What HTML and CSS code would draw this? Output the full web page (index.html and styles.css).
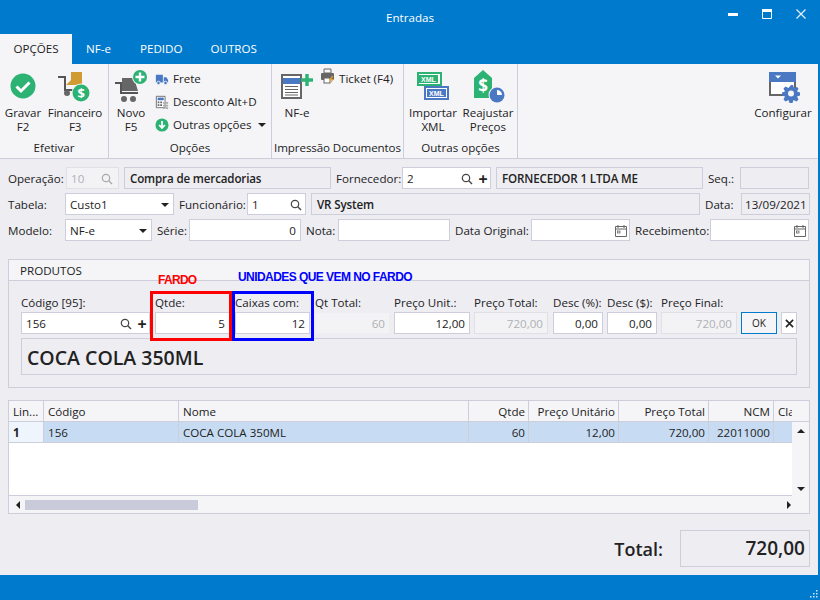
FILE: index.html
```html
<!DOCTYPE html>
<html lang="pt-BR">
<head>
<meta charset="utf-8">
<title>Entradas</title>
<link rel="stylesheet" href="styles.css">
</head>
<body>
<div class="window">
  <header class="titlebar">
    <div class="title">Entradas</div>
    <div class="winbtns">
      <svg class="winbtn" viewBox="0 0 12 12"><rect x="1" y="5" width="10" height="3" fill="#fff"/></svg>
      <svg class="winbtn" viewBox="0 0 12 12"><path d="M1.500 1.500h9v9h-9z" fill="none" stroke="#fff"/><rect x="1" y="1" width="10" height="3" fill="#fff"/></svg>
      <svg class="winbtn" viewBox="0 0 12 12"><path d="M1.500 1.500l9 9M10.500 1.500l-9 9" stroke="#e8f1fa" stroke-width="1.200"/></svg>
    </div>
  </header>
  <nav class="tabs">
    <div class="tab active">OPÇÕES</div>
    <div class="tab t-nfe">NF-e</div>
    <div class="tab t-ped">PEDIDO</div>
    <div class="tab t-out">OUTROS</div>
  </nav>
  <section class="ribbon">
    <div class="group g1">
      <div class="group-body">
        <div class="big b-gravar">
          <svg class="ico" viewBox="0 0 36 36"><circle cx="18" cy="16" r="12.500" fill="#2cb272"/><path d="M11.500 16.500l4.500 4.500 8.500-8.500" fill="none" stroke="#fff" stroke-width="3"/></svg>
          <span>Gravar<br>F2</span>
        </div>
        <div class="big b-fin">
          <svg class="ico" viewBox="0 0 36 36"><path d="M1 7h7v13h8" fill="none" stroke="#555" stroke-width="2"/><path d="M14 2h11v13H9l5-5z" fill="#d09b30"/><circle cx="10" cy="23" r="3" fill="#666"/><circle cx="24" cy="23" r="9.500" fill="#f5f5f8"/><circle cx="24" cy="23" r="8.500" fill="#2cb272"/><text x="24" y="28" class="dollar">$</text></svg>
          <span>Financeiro<br>F3</span>
        </div>
      </div>
      <div class="group-title">Efetivar</div>
    </div>
    <div class="group g2">
      <div class="group-body">
        <div class="big b-novo">
          <svg class="ico" viewBox="0 0 36 36"><path d="M2 13h6v10h17" fill="none" stroke="#555" stroke-width="2"/><path d="M9 21V8h12l4 13z" fill="#666"/><circle cx="11" cy="29" r="3" fill="#666"/><circle cx="20" cy="29" r="3" fill="#666"/><circle cx="27" cy="7" r="8" fill="#f5f5f8"/><circle cx="27" cy="7" r="7" fill="#2cb272"/><path d="M27 2.500v9M22.500 7h9" stroke="#fff" stroke-width="2.400"/></svg>
          <span>Novo<br>F5</span>
        </div>
        <div class="smalls">
          <div class="small">
            <svg class="sico" viewBox="0 0 16 16"><path d="M1 3h8v9H1zM10 6h3l2 3v3h-5z" fill="#4a78c2"/><circle cx="4" cy="12.500" r="2" fill="#4a78c2" stroke="#f5f5f8"/><circle cx="12" cy="12.500" r="2" fill="#4a78c2" stroke="#f5f5f8"/></svg>
            <span>Frete</span>
          </div>
          <div class="small">
            <svg class="sico" viewBox="0 0 16 16"><path d="M1.500 1.500h10v13h-10z" fill="#fff" stroke="#666"/><rect x="3" y="3" width="7" height="3" fill="#4a78c2"/><path d="M3 7.500h2v2H3zM6 7.500h2v2H6zM3 10.500h2v2H3zM6 10.500h2v2H6z" fill="#666"/><path d="M9 8h2v2H9zM12 8h3v2h-3zM9 11h2v2H9zM12 11h3v2h-3zM9 14h2v2H9zM12 14h3v2h-3z" fill="#aaa"/></svg>
            <span>Desconto Alt+D</span>
          </div>
          <div class="small">
            <svg class="sico" viewBox="0 0 16 16"><circle cx="8" cy="8" r="7.500" fill="#2cb272"/><path d="M8 3.500v8M4.700 8L8 11.500 11.300 8" fill="none" stroke="#fff" stroke-width="2"/></svg>
            <span>Outras opções</span>
            <i class="caret rib-caret"></i>
          </div>
        </div>
      </div>
      <div class="group-title">Opções</div>
    </div>
    <div class="group g3">
      <div class="group-body">
        <div class="big b-nfe">
          <svg class="ico" viewBox="0 0 36 36"><path d="M3 5h19v23H3z" fill="#fff" stroke="#666" stroke-width="2"/><rect x="4" y="8" width="17" height="6" fill="#4a78c2"/><path d="M6 16.500h13M6 19.500h13M6 22.500h13M6 25h13" stroke="#666"/><path d="M28 4v12M22 10h12" stroke="#2cb272" stroke-width="3.400"/></svg>
          <span>NF-e</span>
        </div>
        <div class="small s-ticket">
          <svg class="sico2" viewBox="0 0 16 16"><path d="M4 1h7v4H4z" fill="none" stroke="#666"/><rect x="1" y="5" width="13" height="7" rx="1" fill="#666"/><rect x="4" y="10" width="6" height="5" fill="#fff" stroke="#666"/><path d="M12 8l-3 4h2.500l-1.500 4 4-5h-2.500l2-3z" fill="#e6a32a"/></svg>
          <span>Ticket (F4)</span>
        </div>
      </div>
      <div class="group-title">Impressão Documentos</div>
    </div>
    <div class="group g4">
      <div class="group-body">
        <div class="big b-xml">
          <svg class="ico" viewBox="0 0 36 36"><path d="M3 3h23v12H3z" fill="#fff" stroke="#2cb272" stroke-width="2"/><rect x="4" y="5" width="19" height="8" fill="#2cb272"/><text x="13.500" y="11.500" class="xml">XML</text><path d="M10 17h23v12H10z" fill="#fff" stroke="#4a78c2" stroke-width="2"/><rect x="12" y="19" width="19" height="8" fill="#4a78c2"/><text x="21.500" y="25.500" class="xml">XML</text></svg>
          <span>Importar<br>XML</span>
        </div>
        <div class="big b-rea">
          <svg class="ico" viewBox="0 0 36 36"><path d="M13 0l9 8v20H4V8z" fill="#2cb272"/><text x="13" y="22" class="dollar2">$</text><circle cx="27" cy="25" r="8.500" fill="#f5f5f8"/><circle cx="27" cy="25" r="7.500" fill="#4a78c2"/><path d="M27 25v-5a5 5 0 0 1 5 5z" fill="#fff"/></svg>
          <span>Reajustar<br>Preços</span>
        </div>
      </div>
      <div class="group-title">Outras opções</div>
    </div>
    <div class="group g5">
      <div class="group-body">
        <div class="big b-conf">
          <svg class="ico" viewBox="0 0 36 36"><path d="M5 3h25v22H5z" fill="#fff" stroke="#666" stroke-width="2"/><rect x="4" y="2" width="27" height="10" fill="#4a78c2"/><path d="M10 5.500h6l-3 3z" fill="#fff"/><path d="M26 15h2l1 3 3-1 1.500 1.500-1.500 3 3 1v3l-3 1 1.500 3-2 2-3-1.500-1 3h-3l-1-3-3 1.500-2-2 1.500-3-3-1v-3l3-1-1.500-3 2-2 3 1.500z" fill="#4a78c2"/><circle cx="26" cy="23.500" r="3" fill="#f5f5f8"/></svg>
          <span>Configurar</span>
        </div>
      </div>
    </div>
  </section>

  <main class="content">
    <div class="form">
      <div class="row">
        <label class="lb l-58">Operação:</label>
        <div class="in disabled w-53"><span>10</span><svg class="mag dim" viewBox="0 0 12 12"><circle cx="5" cy="5" r="3.700" fill="none" stroke="currentColor" stroke-width="1.200"/><path d="M7.800 7.800L11 11" stroke="currentColor" stroke-width="1.400"/></svg></div>
        <div class="disp w-207">Compra de mercadorias</div>
        <label class="lb l-66">Fornecedor:</label>
        <div class="in w-89 has-plus"><span>2</span><svg class="mag" viewBox="0 0 12 12"><circle cx="5" cy="5" r="3.700" fill="none" stroke="currentColor" stroke-width="1.200"/><path d="M7.800 7.800L11 11" stroke="currentColor" stroke-width="1.400"/></svg><b class="plus">+</b></div>
        <div class="disp w-207">FORNECEDOR 1 LTDA ME</div>
        <label class="lb l-32">Seq.:</label>
        <div class="disp w-69"></div>
      </div>
      <div class="row">
        <label class="lb l-57">Tabela:</label>
        <div class="in w-109"><span>Custo1</span><i class="caret"></i></div>
        <label class="lb l-68">Funcionário:</label>
        <div class="in w-59 near"><span>1</span><svg class="mag" viewBox="0 0 12 12"><circle cx="5" cy="5" r="3.700" fill="none" stroke="currentColor" stroke-width="1.200"/><path d="M7.800 7.800L11 11" stroke="currentColor" stroke-width="1.400"/></svg></div>
        <div class="disp w-389">VR System</div>
        <label class="lb l-36">Data:</label>
        <div class="disp w-69 nb">13/09/2021</div>
      </div>
      <div class="row">
        <label class="lb l-57">Modelo:</label>
        <div class="in w-87"><span>NF-e</span><i class="caret"></i></div>
        <label class="lb l-32">Série:</label>
        <div class="in w-112 right"><span>0</span></div>
        <label class="lb l-32">Nota:</label>
        <div class="in w-112"></div>
        <label class="lb l-76">Data Original:</label>
        <div class="in w-99"><svg class="cal" viewBox="0 0 12 12"><path d="M.5 1.500h11v10H.5zM.5 4h11" fill="none" stroke="#666"/><path d="M3 0v3M9 0v3" stroke="#666"/><rect x="2.500" y="6" width="2.500" height="2" fill="none" stroke="#666" stroke-width=".8"/></svg></div>
        <label class="lb l-75">Recebimento:</label>
        <div class="in w-99"><svg class="cal" viewBox="0 0 12 12"><path d="M.5 1.500h11v10H.5zM.5 4h11" fill="none" stroke="#666"/><path d="M3 0v3M9 0v3" stroke="#666"/><rect x="2.500" y="6" width="2.500" height="2" fill="none" stroke="#666" stroke-width=".8"/></svg></div>
      </div>
    </div>

    <section class="panel">
      <div class="panel-head">PRODUTOS</div>
      <div class="panel-body">
        <div class="fields">
          <div class="field f-cod"><label>Código [95]:</label><div class="in has-plus"><span>156</span><svg class="mag" viewBox="0 0 12 12"><circle cx="5" cy="5" r="3.700" fill="none" stroke="currentColor" stroke-width="1.200"/><path d="M7.800 7.800L11 11" stroke="currentColor" stroke-width="1.400"/></svg><b class="plus">+</b></div></div>
          <div class="field f-75"><label>Qtde:</label><div class="in right"><span>5</span></div></div>
          <div class="field f-75"><label>Caixas com:</label><div class="in right"><span>12</span></div></div>
          <div class="field f-75"><label>Qt Total:</label><div class="in right disabled nob"><span>60</span></div></div>
          <div class="field f-76 tight"><label>Preço Unit.:</label><div class="in right"><span>12,00</span></div></div>
          <div class="field f-74 tight"><label>Preço Total:</label><div class="in right disabled"><span>720,00</span></div></div>
          <div class="field f-50"><label>Desc (%):</label><div class="in right"><span>0,00</span></div></div>
          <div class="field f-50 tight"><label>Desc ($):</label><div class="in right"><span>0,00</span></div></div>
          <div class="field f-76 tight"><label>Preço Final:</label><div class="in right disabled"><span>720,00</span></div></div>
          <div class="ok tight">OK</div>
          <div class="cancel tight"><svg viewBox="0 0 10 10"><path d="M1 1l8 8M9 1L1 9" stroke="#222" stroke-width="1.800"/></svg></div>
        </div>
        <div class="prod-name">COCA COLA 350ML</div>
      </div>
    </section>

    <section class="grid">
      <div class="grow head">
        <div class="c c1">Lin...</div><div class="c c2">Código</div><div class="c c3">Nome</div><div class="c c4 r">Qtde</div><div class="c c5 r">Preço Unitário</div><div class="c c6 r">Preço Total</div><div class="c c7 r">NCM</div><div class="c c8">Cla</div>
      </div>
      <div class="grid-mid">
        <div class="grid-rows">
          <div class="grow data">
            <div class="c c1 ind">1</div><div class="c c2">156</div><div class="c c3">COCA COLA 350ML</div><div class="c c4 r">60</div><div class="c c5 r">12,00</div><div class="c c6 r">720,00</div><div class="c c7 r">22011000</div><div class="c c8"></div>
          </div>
        </div>
        <div class="vbar"><i class="up"></i><i class="down"></i></div>
      </div>
      <div class="hbar"><i class="left"></i><div class="thumb"></div><i class="rgt"></i></div>
    </section>

    <div class="totals">
      <span class="tot-label">Total:</span>
      <div class="tot-box">720,00</div>
    </div>
  </main>

  <footer class="status">
    <svg class="grip" viewBox="0 0 10 10"><path d="M8 1h1.500v1.500H8zM5 4h1.500v1.500H5zM8 4h1.500v1.500H8zM2 7h1.500v1.500H2zM5 7h1.500v1.500H5zM8 7h1.500v1.500H8z" fill="#cfe4f5"/></svg>
  </footer>

  <div class="mark red"></div>
  <div class="mark blue"></div>
  <div class="note n-red">FARDO</div>
  <div class="note n-blue">UNIDADES QUE VEM NO FARDO</div>
</div>
</body>
</html>
```

FILE: styles.css
```css
* { box-sizing: border-box; }
html, body { margin: 0; height: 100%; }
body { font: 11.6px/14px "Open Sans", "Noto Sans", sans-serif; color: #222; background: #eeedf2; overflow: hidden; }
.window { position: relative; width: 820px; height: 600px; display: flex; flex-direction: column; background: #eeedf2; border-right: 2px solid #007acc; }

.titlebar { height: 34px; background: #007acc; color: #fff; display: flex; align-items: center; padding-top: 1px; flex: none; position: relative; }
.title { flex: 1; text-align: center; padding-left: 2px; }
.winbtns { position: absolute; right: 11px; top: 8px; display: flex; gap: 22px; }
.winbtn { width: 12px; height: 12px; display: block; }
.tabs { height: 30px; background: #007acc; display: flex; flex: none; color: #fff; }
.tab { line-height: 30px; }
.tab.active { width: 72px; background: #f5f5f8; color: #222; text-align: center; }
.t-nfe { margin-left: 14px; }
.t-ped { margin-left: 29px; }
.t-out { margin-left: 28px; }

.ribbon { height: 95px; flex: none; background: #f5f5f8; border-bottom: 1px solid #cccedb; display: flex; }
.group { display: flex; flex-direction: column; border-right: 1px solid #cccedb; height: 94px; }
.g1 { width: 109px; } .g2 { width: 163px; } .g3 { width: 132px; } .g4 { width: 114px; } .g5 { flex: 1; border-right: 0; }
.group-body { flex: 1; display: flex; position: relative; min-height: 0; }
.group-title { text-align: center; height: 18px; line-height: 16px; white-space: nowrap; flex: none; }
.g3 .group-title { letter-spacing: -.1px; }
.big { display: flex; flex-direction: column; align-items: center; text-align: center; padding-top: 6px; flex: none; }
.big span { line-height: 14px; white-space: nowrap; }
.ico { width: 36px; height: 36px; display: block; }
.b-gravar { width: 46px; } .b-fin { width: 58px; letter-spacing: -.2px; }
.b-novo { width: 46px; margin-left: -1px; margin-right: 1px; }
.b-nfe { width: 50px; }
.b-xml { width: 56px; margin-left: 1px; } .b-rea { width: 52px; margin-left: 1px; }
.b-conf { width: 62px; margin-left: auto; margin-right: 4px; }
.dollar { font: 700 13px "Open Sans", sans-serif; fill: #fff; text-anchor: middle; }
.dollar2 { font: 700 17px "Open Sans", sans-serif; fill: #fff; text-anchor: middle; }
.xml { font: 700 7px "Liberation Sans", sans-serif; fill: #fff; text-anchor: middle; }
.smalls { display: flex; flex-direction: column; padding-top: 3px; }
.small { display: flex; align-items: center; height: 23px; white-space: nowrap; }
.sico { width: 14px; height: 14px; margin-right: 4px; flex: none; }
.sico2 { width: 16px; height: 16px; margin-right: 3px; flex: none; margin-top: -5px; }
.s-ticket { margin-top: 3px; margin-left: -2px; }
.caret { width: 0; height: 0; border-left: 4px solid transparent; border-right: 4px solid transparent; border-top: 4px solid #222; display: block; flex: none; }
.rib-caret { margin-left: 6px; }

.content { flex: 1; padding: 8px 8px 0; min-height: 0; }
.form { display: flex; flex-direction: column; gap: 4px; }
.row { display: flex; align-items: center; height: 22px; gap: 5px; }
.lb { flex: none; white-space: nowrap; padding-top: 1px; }
.l-58 { width: 53px; } .l-57 { width: 52px; } .l-66 { width: 61px; } .l-68 { width: 63px; } .l-32 { width: 27px; } .l-36 { width: 31px; } .l-76 { width: 71px; } .l-75 { width: 70px; }
.in { height: 22px; border: 1px solid #cccedb; background: #fff; display: flex; align-items: center; padding: 1px 4px 0; flex: none; justify-content: space-between; }
.in.has-plus { padding-right: 0; }
.in.near { padding-right: 2px; }
.in.right { justify-content: flex-end; }
.in.disabled { background: #f3f3f6; color: #b0b0b4; border-color: #e0e0e6; }
.in.nob { border-color: #eeedf2; }
.in span { flex: 1; white-space: nowrap; }
.in.right span { text-align: right; }
.disp { height: 22px; border: 1px solid #cccedb; background: #eeedf2; padding: 0 5px; line-height: 21px; font-weight: 600; flex: none; white-space: nowrap; letter-spacing: -.15px; }
.disp.nb { font-weight: 400; padding: 0 3px; letter-spacing: 0; }
.w-53 { width: 53px; } .w-207 { width: 207px; } .w-89 { width: 89px; } .w-69 { width: 69px; } .w-109 { width: 109px; } .w-59 { width: 59px; } .w-389 { width: 389px; } .w-87 { width: 87px; } .w-112 { width: 112px; } .w-99 { width: 99px; }
.mag { width: 12px; height: 12px; color: #444; flex: none; margin-right: 1px; }
.mag.dim { color: #aaa; }
.plus { font-size: 16px; line-height: 14px; width: 14px; text-align: center; margin-left: 2px; flex: none; }
.cal { width: 12px; height: 12px; margin-left: auto; flex: none; margin-right: -2px; }

.panel { margin-top: 18px; height: 129px; border: 1px solid #cccedb; width: 802px; flex: none; }
.panel-head { height: 21px; background: #f5f5f8; border-bottom: 1px solid #cccedb; padding-left: 11px; line-height: 22px; }
.panel-body { padding: 14px 12px 0; }
.fields { display: flex; gap: 5px; align-items: flex-end; }
.field { display: flex; flex-direction: column; flex: none; }
.field label { height: 17px; line-height: 16px; white-space: nowrap; }
.f-cod { width: 129px; } .f-75 { width: 75px; } .f-76 { width: 76px; } .f-74 { width: 74px; } .f-50 { width: 50px; }
.tight { margin-left: -1px; }
.field .in { width: 100%; }
.ok { width: 36px; height: 22px; background: #f5f5f8; border: 1px solid #007acc; text-align: center; font-size: 10px; line-height: 20px; flex: none; }
.cancel { width: 16px; height: 22px; background: #fff; border: 1px solid #cccedb; display: flex; align-items: center; justify-content: center; flex: none; }
.cancel svg { width: 9px; height: 9px; }
.prod-name { margin-top: 4px; height: 37px; width: 776px; border: 1px solid #cccedb; font-size: 19.500px; line-height: 37px; font-weight: 600; padding-left: 5px; white-space: nowrap; }

.grid { margin-top: 12px; width: 802px; height: 114px; border: 1px solid #cccedb; background: #fff; display: flex; flex-direction: column; }
.grow { display: flex; height: 21px; flex: none; }
.head { background: #f5f5f8; border-bottom: 1px solid #cccedb; }
.data { background: #c7dcf3; border-bottom: 1px solid #cccedb; }
.c { border-right: 1px solid #cccedb; padding: 0 4px; line-height: 21px; white-space: nowrap; overflow: hidden; flex: none; }
.c.r { text-align: right; padding-right: 3px; }
.c1 { width: 35px; } .c2 { width: 135px; } .c3 { width: 290px; } .c4 { width: 60px; } .c5 { width: 90px; } .c6 { width: 90px; } .c7 { width: 65px; } .c8 { width: 18px; border-right: 0; padding-right: 0; }
.ind { background: #eff5fd; font-weight: 700; }
.grid-mid { flex: 1; display: flex; min-height: 0; }
.grid-rows { width: 783px; flex: none; border-bottom: 1px solid #cccedb; }
.vbar { flex: 1; background: #f5f5f8; display: flex; flex-direction: column; justify-content: space-between; align-items: center; padding: 7px 0 5px; }
.up { width: 0; height: 0; border: 4px solid transparent; border-top: 0; border-bottom-color: #222; display: block; }
.down { width: 0; height: 0; border: 4px solid transparent; border-bottom: 0; border-top-color: #222; display: block; }
.hbar { height: 17px; flex: none; background: #f5f5f8; display: flex; align-items: center; padding-left: 7px; }
.left { width: 0; height: 0; border: 4px solid transparent; border-left: 0; border-right-color: #222; display: block; }
.thumb { width: 173px; height: 10px; background: #cacbda; margin-left: 5px; }
.rgt { width: 0; height: 0; border: 4px solid transparent; border-right: 0; border-left-color: #222; display: block; margin-left: 589px; }

.totals { display: flex; justify-content: flex-end; align-items: center; width: 802px; margin-top: 16px; }
.tot-label { font-size: 18px; font-weight: 600; margin-right: 17px; }
.tot-box { width: 130px; height: 37px; border: 1px solid #cccedb; font-size: 19px; font-weight: 600; text-align: right; line-height: 35px; padding-right: 4px; }

.status { height: 25px; flex: none; background: #007acc; position: relative; margin-right: -2px; }
.grip { position: absolute; right: 2px; bottom: 1px; width: 10px; height: 10px; }

.mark { position: absolute; top: 291px; height: 50px; border: 3px solid; pointer-events: none; }
.red { left: 150px; width: 82px; border-color: #f00; }
.blue { left: 232px; width: 82px; border-color: #00f; }
.note { position: absolute; font: 700 12px/14px "Liberation Sans", sans-serif; white-space: nowrap; letter-spacing: -.56px; }
.n-red { left: 158px; top: 273px; color: #f00; letter-spacing: -.7px; }
.n-blue { left: 238px; top: 270px; color: #00f; }
```
